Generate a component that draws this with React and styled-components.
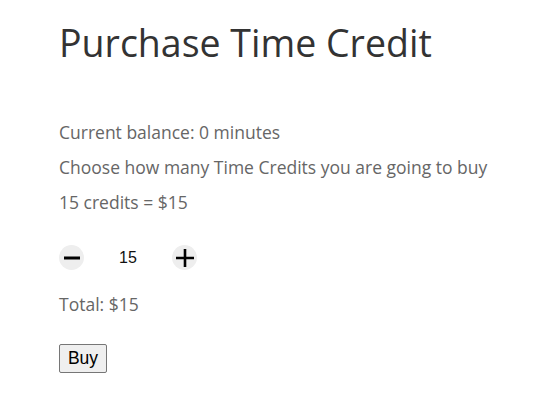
import { useState } from 'react'
import styled, { createGlobalStyle } from 'styled-components'

const Global = createGlobalStyle`
  body {
    margin: 0;
    background: #fff;
    font-family: "Open Sans", sans-serif;
  }
`

const Page = styled.div`
  padding: 20px 0 0 59px;
`

const Title = styled.h1`
  margin: 0 0 54px;
  font-size: 37.5px;
  line-height: 45px;
  font-weight: 400;
  color: #333;
`

const Text = styled.p`
  margin: 0 0 ${(p) => p.$gap ?? 9}px;
  font-size: 17.5px;
  line-height: 26px;
  color: #666;
`

const Stepper = styled.div`
  display: flex;
  align-items: center;
  height: 25px;
  margin: 30px 0 21px;
`

const RoundBtn = styled.button`
  width: 25px;
  height: 25px;
  padding: 0;
  border: none;
  border-radius: 50%;
  background: #eee;
  display: flex;
  align-items: center;
  justify-content: center;
  cursor: pointer;
`

const Count = styled.span`
  width: 88px;
  text-align: center;
  font-family: "Liberation Sans", Arial, sans-serif;
  font-size: 16px;
  color: #111;
`

const BuyBtn = styled.button`
  margin-top: 27px;
  width: 48px;
  height: 29px;
  padding: 0;
  font-family: "Liberation Sans", Arial, sans-serif;
  font-size: 17.5px;
  color: #000;
  background: #efefef;
  border: 1px solid #767676;
  border-radius: 2px;
`

const Minus = () => (
  <svg width="18" height="18" viewBox="0 0 18 18">
    <path d="M1 9h16" stroke="#000" strokeWidth="3" />
  </svg>
)

const Plus = () => (
  <svg width="20" height="20" viewBox="0 0 20 20">
    <path d="M1 10h18M10 1v18" stroke="#000" strokeWidth="2.6" />
  </svg>
)

export default function App() {
  const [qty, setQty] = useState(15)

  return (
    <Page>
      <Global />
      <Title>Purchase Time Credit</Title>
      <Text>Current balance: 0 minutes</Text>
      <Text>Choose how many Time Credits you are going to buy</Text>
      <Text $gap={0}>15 credits = $15</Text>
      <Stepper>
        <RoundBtn onClick={() => setQty(Math.max(1, qty - 1))}><Minus /></RoundBtn>
        <Count>{qty}</Count>
        <RoundBtn onClick={() => setQty(qty + 1)}><Plus /></RoundBtn>
      </Stepper>
      <Text $gap={0}>Total: ${qty}</Text>
      <BuyBtn>Buy</BuyBtn>
    </Page>
  )
}
